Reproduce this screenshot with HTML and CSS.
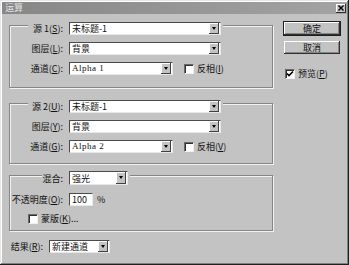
FILE: index.html
```html
<!DOCTYPE html>
<html lang="zh-CN">
<head>
    <meta charset="UTF-8">
    <title>运算</title>
    <link rel="stylesheet" href="styles.css">
</head>
<body>
    <div class="dialog">
        <div class="titlebar">
            <span class="title">运算</span>
            <span class="close">
                <svg width="6" height="6" viewBox="0 0 6 6"><path d="M0.5 0.5 L5.5 5.5 M5.5 0.5 L0.5 5.5" stroke="#000" stroke-width="1.4"/></svg>
            </span>
        </div>
        <div class="content">
            <div class="main">
                <div class="group">
                    <div class="row head">
                        <span class="label">源 1(<u>S</u>):</span>
                        <div class="popup wide"><span class="value">未标题-1</span><span class="arrow"></span></div>
                    </div>
                    <div class="row">
                        <span class="label">图层(<u>L</u>):</span>
                        <div class="popup wide"><span class="value">背景</span><span class="arrow"></span></div>
                    </div>
                    <div class="row">
                        <span class="label">通道(<u>C</u>):</span>
                        <div class="popup mid"><span class="value latin">Alpha 1</span><span class="arrow"></span></div>
                        <span class="check"></span>
                        <span class="check-label">反相(<u>I</u>)</span>
                    </div>
                </div>

                <div class="group second">
                    <div class="row head">
                        <span class="label">源 2(<u>U</u>):</span>
                        <div class="popup wide"><span class="value">未标题-1</span><span class="arrow"></span></div>
                    </div>
                    <div class="row">
                        <span class="label">图层(<u>Y</u>):</span>
                        <div class="popup wide"><span class="value">背景</span><span class="arrow"></span></div>
                    </div>
                    <div class="row">
                        <span class="label">通道(<u>G</u>):</span>
                        <div class="popup mid"><span class="value latin">Alpha 2</span><span class="arrow"></span></div>
                        <span class="check"></span>
                        <span class="check-label">反相(<u>V</u>)</span>
                    </div>
                </div>

                <div class="group blend">
                    <div class="row head">
                        <span class="label">混合:</span>
                        <div class="popup short"><span class="value">强光</span><span class="arrow"></span></div>
                    </div>
                    <div class="row opacity">
                        <span class="label">不透明度(<u>O</u>):</span>
                        <div class="field">100</div>
                        <span class="unit">%</span>
                    </div>
                    <div class="row mask">
                        <span class="check"></span>
                        <span class="check-label">蒙版(<u>K</u>)...</span>
                    </div>
                </div>

                <div class="row result">
                    <span class="label">结果(<u>R</u>):</span>
                    <div class="popup result-popup"><span class="value">新建通道</span><span class="arrow"></span></div>
                </div>
            </div>

            <div class="side">
                <button class="btn default">确定</button>
                <button class="btn">取消</button>
                <div class="preview">
                    <span class="check checked">
                        <svg width="8" height="8" viewBox="0 0 8 8"><path d="M1 3.5 L3 5.5 L7 1.5" fill="none" stroke="#000" stroke-width="1.6"/></svg>
                    </span>
                    <span class="check-label">预览(<u>P</u>)</span>
                </div>
            </div>
        </div>
    </div>
</body>
</html>
```

FILE: styles.css
```css
body {
    margin: 0;
    background-color: #c3c3c3;
    font-family: "Noto Sans CJK SC", "Liberation Sans", sans-serif;
    font-size: 9px;
    color: #111;
}
u {
    text-decoration: underline;
}
.dialog {
    width: 349px;
    height: 265px;
    box-sizing: border-box;
    padding: 2px;
    background-color: #c3c3c3;
    box-shadow: inset -1px -1px #202020, inset 1px 1px #e6e6e6, inset -2px -2px #808080, inset 2px 2px #fff;
    overflow: hidden;
}
.titlebar {
    height: 12px;
    display: flex;
    align-items: center;
    justify-content: space-between;
    padding: 0 1px 0 3px;
    background: linear-gradient(to right, #878787, #a3a3a3);
}
.title {
    color: #e4e4e4;
    line-height: 12px;
}
.close {
    width: 10px;
    height: 9px;
    box-sizing: border-box;
    background-color: #c3c3c3;
    box-shadow: inset -1px -1px #303030, inset 1px 1px #fff;
    display: flex;
    align-items: center;
    justify-content: center;
}
.content {
    display: flex;
    padding-left: 7px;
}
.main {
    width: 264px;
    padding-top: 11px;
}
.group {
    border: 1px solid #858585;
    box-shadow: inset 1px 1px #f2f2f2, 1px 1px #f2f2f2;
    padding: 0 0 12px 1px;
    width: 261px;
}
.group.second {
    margin-top: 15px;
    padding-bottom: 10px;
}
.group.blend {
    margin-top: 11px;
    padding-bottom: 6px;
}
.row {
    display: flex;
    align-items: center;
    height: 13px;
    margin-top: 7px;
}
.label {
    width: 52px;
    text-align: right;
    margin-right: 6px;
    white-space: nowrap;
}
.row.head {
    width: fit-content;
    margin-top: -4px;
    margin-left: 17px;
    padding-right: 2px;
    background-color: #c3c3c3;
}
.head .label {
    width: 35px;
}
.blend .row.head {
    height: 14px;
    margin-top: -5px;
    margin-left: 31px;
}
.blend .head .label {
    width: 21px;
}
.popup {
    height: 13px;
    box-sizing: border-box;
    background-color: #fff;
    border: 1px solid;
    border-color: #4a4a4a #e8e8e8 #e8e8e8 #4a4a4a;
    display: flex;
    align-items: center;
    justify-content: space-between;
    padding-left: 2px;
}
.popup.wide {
    width: 152px;
}
.popup.mid {
    width: 104px;
}
.popup.short {
    width: 59px;
    height: 14px;
}
.popup.result-popup {
    width: 61px;
}
.value {
    white-space: nowrap;
    line-height: 11px;
}
.value.latin {
    font-family: "Liberation Serif", serif;
    letter-spacing: 0.5px;
}
.arrow {
    width: 10px;
    height: 100%;
    box-sizing: border-box;
    margin-right: 1px;
    background-color: #c3c3c3;
    box-shadow: inset -1px -1px #404040, inset 1px 1px #fff;
    position: relative;
}
.arrow::after {
    content: "";
    position: absolute;
    left: 3px;
    top: 4px;
    border-left: 2px solid transparent;
    border-right: 2px solid transparent;
    border-top: 3px solid #000;
}
.check {
    width: 10px;
    height: 10px;
    box-sizing: border-box;
    background-color: #fff;
    border: 1px solid;
    border-color: #6a6a6a #f0f0f0 #f0f0f0 #6a6a6a;
    box-shadow: inset 1px 1px #303030;
    margin-left: 11px;
    display: flex;
    align-items: center;
    justify-content: center;
}
.check-label {
    margin-left: 3px;
    white-space: nowrap;
}
.opacity {
    margin-top: 8px;
}
.field {
    width: 24px;
    height: 13px;
    box-sizing: border-box;
    background-color: #fff;
    border: 1px solid;
    border-color: #4a4a4a #e8e8e8 #e8e8e8 #4a4a4a;
    padding-left: 2px;
    line-height: 11px;
}
.unit {
    margin-left: 4px;
}
.mask {
    height: 11px;
}
.mask .check {
    margin-left: 17px;
}
.row.result {
    margin-top: 9px;
    margin-left: -1px;
}
.result .label {
    width: 35px;
}
.side {
    margin-left: 11px;
    padding-top: 8px;
    display: flex;
    flex-direction: column;
    width: 56px;
}
.btn {
    width: 56px;
    height: 13px;
    padding: 0;
    border: none;
    font-family: inherit;
    font-size: 9px;
    color: #111;
    background-color: #c3c3c3;
    box-shadow: inset -1px -1px #303030, inset 1px 1px #fff, inset -2px -2px #858585;
    margin-bottom: 6px;
    line-height: 13px;
}
.btn.default {
    box-shadow: 0 0 0 1px #202020, inset -1px -1px #303030, inset 1px 1px #fff, inset -2px -2px #858585;
}
.preview {
    display: flex;
    align-items: center;
    margin-top: 7px;
}
.preview .check {
    margin-left: 1px;
}
```
